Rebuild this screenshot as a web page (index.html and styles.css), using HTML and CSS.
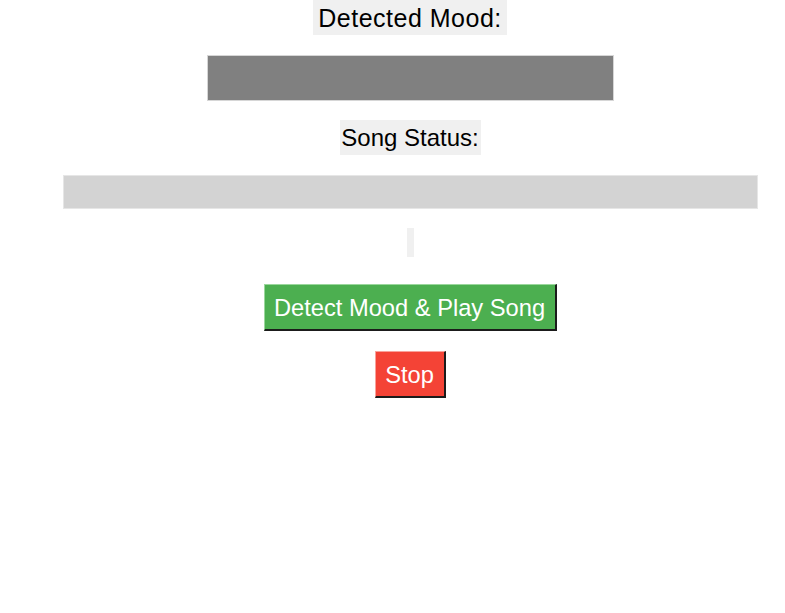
FILE: index.html
```html
<!DOCTYPE html>
<html>
<head>
<meta charset="utf-8">
<link rel="stylesheet" href="styles.css">
</head>
<body>
<div class="app">
  <div class="label lbl-mood">Detected Mood:</div>
  <div class="mood-box"></div>
  <div class="label lbl-status">Song Status:</div>
  <div class="status-bar"></div>
  <div class="spacer-label"></div>
  <button class="btn btn-detect">Detect Mood &amp; Play Song</button>
  <button class="btn btn-stop">Stop</button>
</div>
</body>
</html>
```
FILE: styles.css
```css
html, body {
  margin: 0;
  padding: 0;
  background: #ffffff;
  overflow: hidden;
}
.app {
  width: 785px;
  height: 613px;
  padding-left: 35px;
  box-sizing: border-box;
  display: flex;
  flex-direction: column;
  align-items: center;
  font-family: "Liberation Sans", Arial, sans-serif;
}
.label {
  background: #f0f0f0;
  color: #000;
  font-size: 24px;
  height: 35px;
  line-height: 36px;
  box-sizing: border-box;
  white-space: nowrap;
  text-align: center;
}
.lbl-mood {
  width: 194px;
  font-size: 25px;
  letter-spacing: 0.5px;
}
.lbl-status {
  margin-top: 19px;
  width: 141px;
}
.mood-box {
  margin-top: 20px;
  width: 407px;
  height: 46px;
  background: #808080;
  border: 1px solid #d6d6d6;
  box-sizing: border-box;
}
.status-bar {
  margin-top: 20px;
  width: 695px;
  height: 34px;
  background: #d3d3d3;
  border: 1px solid #e6e6e6;
  box-sizing: border-box;
}
.spacer-label {
  margin-top: 19px;
  width: 7px;
  height: 29px;
  background: #f0f0f0;
}
.btn {
  font-family: "Liberation Sans", Arial, sans-serif;
  font-size: 23.7px;
  color: #ffffff;
  height: 47px;
  padding: 2px 0 0 0;
  box-sizing: border-box;
  border-style: solid;
  border-width: 1px 2px 2px 1px;
  white-space: nowrap;
  text-align: center;
  cursor: pointer;
}
.btn-detect {
  margin-top: 27px;
  width: 293px;
  background: #4caf50;
  border-color: #9ad79c #1b1b1b #1b1b1b #9ad79c;
}
.btn-stop {
  margin-top: 20px;
  width: 71px;
  background: #f44336;
  border-color: #f9a29b #1b1b1b #1b1b1b #f9a29b;
}
```
